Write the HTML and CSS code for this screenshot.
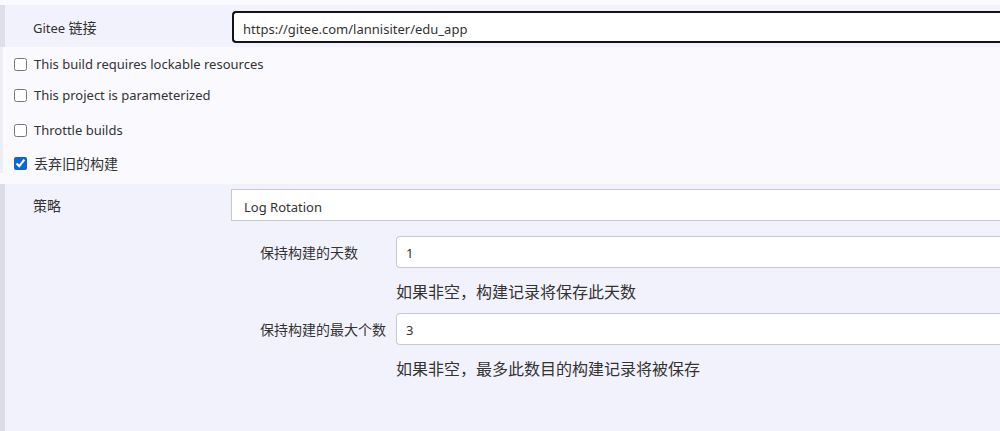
FILE: index.html
```html
<!DOCTYPE html>
<html>
<head>
<meta charset="utf-8">
<link rel="stylesheet" href="styles.css">
</head>
<body>
<div class="page">
  <div class="row gitee">
    <div class="label latin">Gitee <span class="cjk">链接</span></div>
    <div class="control"><div class="field focused latin">https://gitee.com/lannisiter/edu_app</div></div>
  </div>
  <div class="checks">
    <label class="cb cb1"><input type="checkbox"><span class="latin">This build requires lockable resources</span></label>
    <label class="cb cb2"><input type="checkbox"><span class="latin">This project is parameterized</span></label>
    <label class="cb cb3"><input type="checkbox"><span class="latin">Throttle builds</span></label>
    <label class="cb cb4"><input type="checkbox" checked><span>丢弃旧的构建</span></label>
  </div>
  <div class="section">
    <div class="row strat">
      <div class="label">策略</div>
      <div class="control"><div class="select latin">Log Rotation</div></div>
    </div>
    <div class="sub">
      <div class="subrow">
        <div class="sublabel">保持构建的天数</div>
        <div class="subctl">
          <div class="field small latin">1</div>
          <div class="hint">如果非空，构建记录将保存此天数</div>
        </div>
      </div>
      <div class="subrow">
        <div class="sublabel">保持构建的最大个数</div>
        <div class="subctl">
          <div class="field small latin">3</div>
          <div class="hint">如果非空，最多此数目的构建记录将被保存</div>
        </div>
      </div>
    </div>
  </div>
</div>
</body>
</html>
```

FILE: styles.css
```css
html, body {
  margin: 0;
  padding: 0;
  overflow: hidden;
  background: #f9f9fe;
}
body {
  font-family: "Noto Sans", "Noto Sans CJK SC", sans-serif;
  font-size: 14px;
  color: #333;
  height: 431px;
}
.latin {
  font-size: 13px;
}
.cjk {
  font-size: 14px;
}
.page {
  width: 1000px;
  padding-top: 5px;
  height: 426px;
  display: flex;
  flex-direction: column;
}
.row {
  display: flex;
  align-items: center;
}
.gitee {
  background: #f2f2fc;
  border-left: 5px solid #dfdfe9;
  padding: 6px 0 4px 28px;
}
.label {
  width: 199px;
  flex: none;
}
.control {
  flex: 1;
}
.field {
  box-sizing: border-box;
  height: 32px;
  background: #fff;
  border: 1px solid #c8c8d2;
  border-right: 0;
  border-radius: 4px 0 0 4px;
  padding: 2px 10px 0;
  display: flex;
  align-items: center;
}
.field.focused {
  border: 2px solid #141414;
  border-right: 0;
  padding: 3px 9px 0;
}
.checks {
  border-left: 3px solid #ededf5;
  padding-left: 11px;
  display: flex;
  flex-direction: column;
}
.cb {
  display: flex;
  align-items: center;
  height: 20px;
}
.cb input {
  margin: 0 7px 0 0;
  width: 13px;
  height: 13px;
  accent-color: #0b64d8;
}
.cb1 { margin-top: 7px; }
.cb2 { margin-top: 11px; }
.cb3 { margin-top: 15px; }
.cb4 { margin-top: 13px; }
.section {
  margin-top: 11px;
  flex: 1;
  background: #f2f2fc;
  border-left: 5px solid #dcdce6;
  padding: 5px 0 0 28px;
}
.strat .label {
  width: 198px;
}
.select {
  box-sizing: border-box;
  height: 32px;
  background: #fff;
  border: 1px solid #c8c8d2;
  border-right: 0;
  padding: 3px 12px 0;
  display: flex;
  align-items: center;
}
.sub {
  padding: 15px 0 0 227px;
  display: flex;
  flex-direction: column;
  gap: 9px;
}
.subrow {
  display: flex;
}
.sublabel {
  width: 136px;
  flex: none;
  padding-top: 6px;
  font-size: 14px;
}
.subctl {
  flex: 1;
}
.field.small {
  padding-left: 9px;
}
.hint {
  font-size: 16px;
  line-height: 24px;
  margin-top: 12px;
}
```
